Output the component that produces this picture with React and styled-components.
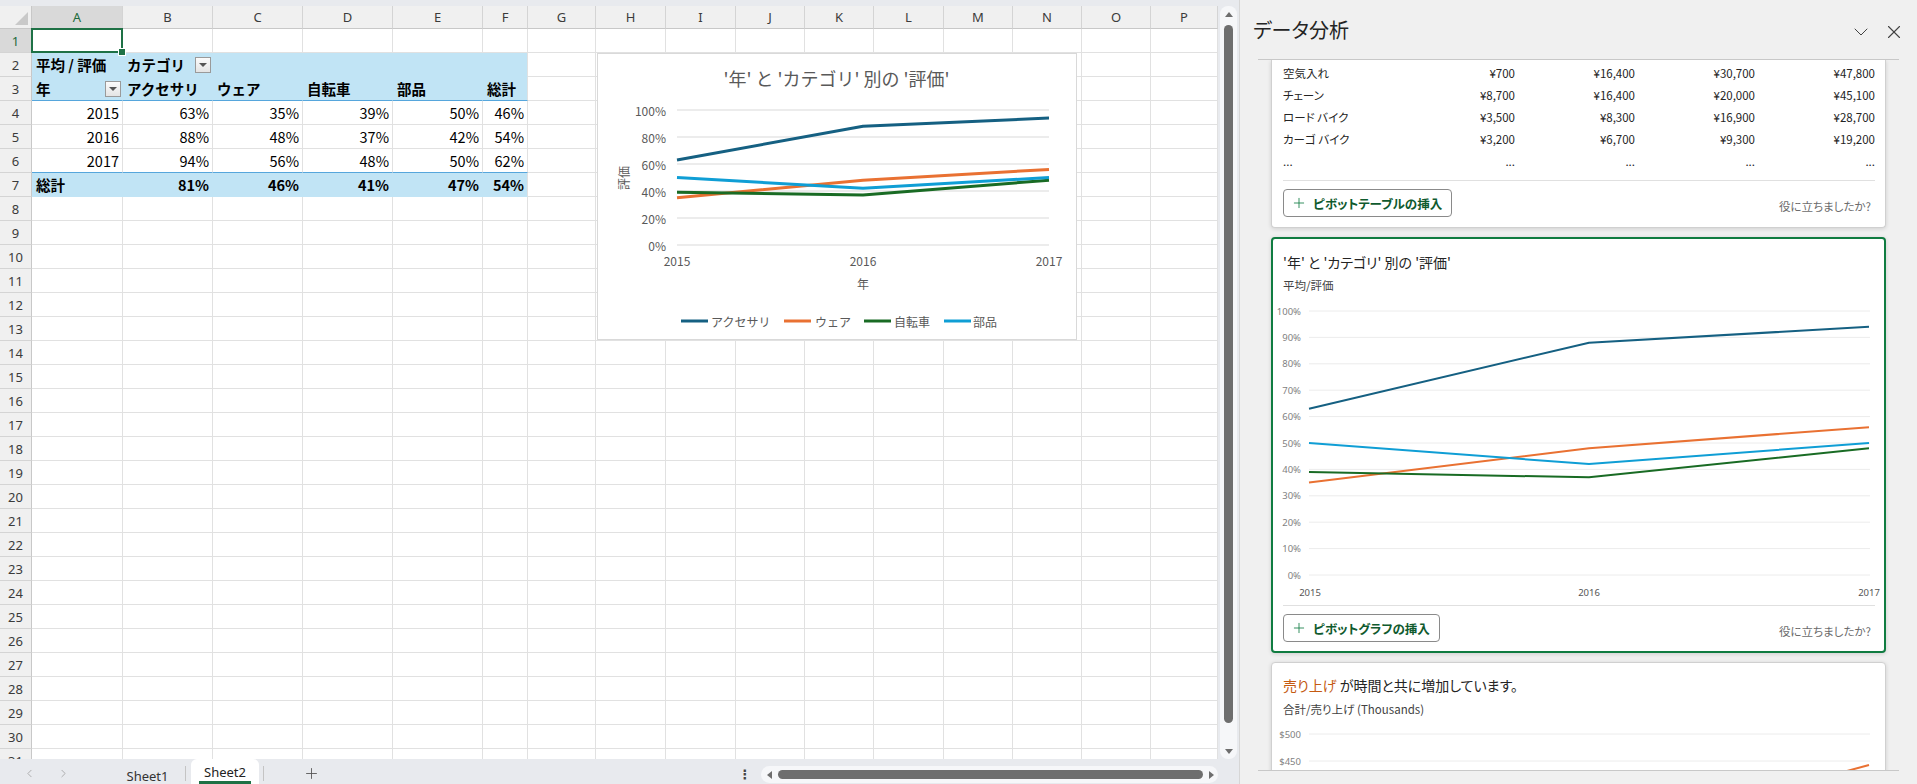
import React from 'react';
import styled, { createGlobalStyle, css } from 'styled-components';
import { ChevronDown, ChevronLeft, ChevronRight, Plus, X } from 'lucide-react';

const COLS = [
  { k: 'A', w: 91 }, { k: 'B', w: 90 }, { k: 'C', w: 90 }, { k: 'D', w: 90 },
  { k: 'E', w: 90 }, { k: 'F', w: 45 }, { k: 'G', w: 68 }, { k: 'H', w: 70 },
  { k: 'I', w: 70 }, { k: 'J', w: 69 }, { k: 'K', w: 69 }, { k: 'L', w: 70 },
  { k: 'M', w: 69 }, { k: 'N', w: 69 }, { k: 'O', w: 69 }, { k: 'P', w: 67 },
];
const GRID = `32px ${COLS.map(c => c.w + 'px').join(' ')}`;

const FILL = '#c1e4f5';
const GRIDLINE = '#e1e1e1';

// Office 2023 テーマ色
const SERIES = [
  { name: 'アクセサリ', color: '#156082', vals: [0.63, 0.88, 0.94] },
  { name: 'ウェア', color: '#E97132', vals: [0.35, 0.48, 0.56] },
  { name: '自転車', color: '#196B24', vals: [0.39, 0.37, 0.48] },
  { name: '部品', color: '#0F9ED5', vals: [0.5, 0.42, 0.5] },
];

const pct = (v, bold) => ({ t: v, right: 1, b: bold });
const PIVOT = {
  2: [{ t: '平均 / 評価', b: 1 }, { t: 'カテゴリ', b: 1, dd: 1 }, {}, {}, {}, {}],
  3: [{ t: '年', b: 1, dd: 1 }, { t: 'アクセサリ', b: 1 }, { t: 'ウェア', b: 1 }, { t: '自転車', b: 1 }, { t: '部品', b: 1 }, { t: '総計', b: 1 }],
  4: [pct('2015'), pct('63%'), pct('35%'), pct('39%'), pct('50%'), pct('46%')],
  5: [pct('2016'), pct('88%'), pct('48%'), pct('37%'), pct('42%'), pct('54%')],
  6: [pct('2017'), pct('94%'), pct('56%'), pct('48%'), pct('50%'), pct('62%')],
  7: [{ t: '総計', b: 1 }, pct('81%', 1), pct('46%', 1), pct('41%', 1), pct('47%', 1), pct('54%', 1)],
};

const SALES = [
  ['空気入れ', '¥700', '¥16,400', '¥30,700', '¥47,800'],
  ['チェーン', '¥8,700', '¥16,400', '¥20,000', '¥45,100'],
  ['ロード バイク', '¥3,500', '¥8,300', '¥16,900', '¥28,700'],
  ['カーゴ バイク', '¥3,200', '¥6,700', '¥9,300', '¥19,200'],
  ['...', '...', '...', '...', '...'],
];

const GlobalStyle = createGlobalStyle`
  html, body {
    margin: 0;
    padding: 0;
    overflow: hidden;
    background: #e8eaee;
  }
  body {
    font-family: "Noto Sans CJK JP", "Noto Sans", sans-serif;
  }
`;

const Frame = styled.div`
  display: flex;
  width: 1917px;
  height: 784px;
  overflow: hidden;
`;

const Workbook = styled.div`
  width: 1239px;
  flex-shrink: 0;
  display: flex;
  flex-direction: column;
  background: #e8eaee;
`;

const SheetRow = styled.div`
  flex: 1;
  min-height: 0;
  display: flex;
  padding-top: 6px;
`;

const GridViewport = styled.div`
  position: relative;
  width: 1218px;
  flex-shrink: 0;
  overflow: hidden;
  background: #fff;
`;

const GridRow = styled.div`
  display: grid;
  grid-template-columns: ${GRID};
  height: ${p => p.$h || 24}px;
`;

const headCell = css`
  box-sizing: border-box;
  display: flex;
  align-items: center;
  justify-content: center;
  font-family: "Noto Sans", sans-serif;
  font-size: 13px;
  background: ${p => (p.$active ? '#d9d9d9' : '#f0f0f0')};
  color: ${p => (p.$active ? '#1d6b3c' : '#3b3b3b')};
`;

const Corner = styled.div`
  ${headCell};
  position: relative;
  border-right: 1px solid #c8c8c8;
  border-bottom: 1px solid #c8c8c8;
`;

const CornerMark = styled.span`
  position: absolute;
  right: 3px;
  bottom: 3px;
  width: 0;
  height: 0;
  border-left: 13px solid transparent;
  border-bottom: 13px solid #c9c9c9;
`;

const ColHead = styled.div`
  ${headCell};
  border-right: 1px solid #d4d4d4;
  border-bottom: 1px solid #c8c8c8;
`;

const RowHead = styled.div`
  ${headCell};
  border-right: 1px solid #c8c8c8;
  border-bottom: 1px solid #d4d4d4;
`;

const Cell = styled.div`
  box-sizing: border-box;
  position: relative;
  display: flex;
  align-items: center;
  justify-content: ${p => (p.$right ? 'flex-end' : 'space-between')};
  padding: 0 3px 0 4px;
  background: ${p => (p.$fill ? FILL : '#fff')};
  border-right: 1px solid ${p => (p.$fill && !p.$edge ? FILL : GRIDLINE)};
  border-bottom: 1px solid ${p => (p.$blue ? '#56a6dc' : p.$fill ? FILL : GRIDLINE)};
  font-size: 14.5px;
  font-weight: ${p => (p.$bold ? 700 : 400)};
  color: #000;
  white-space: nowrap;
`;

const DropBtn = styled.span`
  box-sizing: border-box;
  width: 16px;
  height: 16px;
  margin-right: -2px;
  border: 1px solid #9a9a9a;
  background: linear-gradient(#fbfbfb, #e4e4e4);
  display: flex;
  align-items: center;
  justify-content: center;

  &::before {
    content: '';
    border-left: 4px solid transparent;
    border-right: 4px solid transparent;
    border-top: 4px solid #555;
  }
`;

const Selection = styled.div`
  position: absolute;
  left: -1px;
  top: -1px;
  right: -1px;
  bottom: -1px;
  border: 2px solid #1e7145;
  pointer-events: none;
  z-index: 2;

  &::after {
    content: '';
    position: absolute;
    right: -5px;
    bottom: -5px;
    width: 6px;
    height: 6px;
    background: #1e7145;
    border: 1px solid #fff;
  }
`;

const ChartBox = styled.div`
  position: absolute;
  left: 597px;
  top: 47px;
  width: 480px;
  height: 287px;
  box-sizing: border-box;
  background: #fff;
  border: 1px solid #d9d9d9;
  z-index: 3;

  svg {
    display: block;
    font-family: "Noto Sans CJK JP", "Noto Sans", sans-serif;
  }
`;

const VScroll = styled.div`
  width: 17px;
  margin-left: 2px;
  box-sizing: border-box;
  background: #f6f7f9;
  border-radius: 8px;
  display: flex;
  flex-direction: column;
  align-items: center;
  padding: 6px 0 5px;
`;

const Tri = styled.span`
  width: 0;
  height: 0;
  ${p => (p.$dir === 'up' || p.$dir === 'down') && css`
    border-left: 4px solid transparent;
    border-right: 4px solid transparent;
  `}
  ${p => (p.$dir === 'left' || p.$dir === 'right') && css`
    border-top: 4px solid transparent;
    border-bottom: 4px solid transparent;
  `}
  ${p => p.$dir === 'up' && 'border-bottom: 5px solid #6e6e6e;'}
  ${p => p.$dir === 'down' && 'border-top: 5px solid #6e6e6e;'}
  ${p => p.$dir === 'left' && 'border-right: 5px solid #6e6e6e;'}
  ${p => p.$dir === 'right' && 'border-left: 5px solid #6e6e6e;'}
`;

const VThumb = styled.div`
  width: 9px;
  height: 698px;
  margin-top: 8px;
  border-radius: 5px;
  background: #6e6e6e;
`;

const Spacer = styled.div`
  flex: 1;
`;

const TabBar = styled.div`
  height: 25px;
  flex-shrink: 0;
  display: flex;
  align-items: stretch;
  padding: 0 21px 0 12px;
  font-family: "Noto Sans", sans-serif;
  font-size: 13px;
  color: #333;
`;

const NavBtn = styled.div`
  width: 34px;
  display: flex;
  align-items: center;
  justify-content: center;
  padding-top: 4px;
  color: #a0a0a0;
`;

const SheetTab = styled.div`
  position: relative;
  width: ${p => p.$w}px;
  margin-left: ${p => p.$ml || 0}px;
  display: flex;
  align-items: center;
  justify-content: center;
  box-sizing: border-box;
  padding-top: ${p => (p.$active ? 1 : 8)}px;
  ${p => p.$active && css`
    background: #fff;
    border-radius: 6px 6px 0 0;
    color: #222;
    &::after {
      content: '';
      position: absolute;
      left: 8px;
      right: 8px;
      bottom: 0;
      height: 3px;
      background: #1e7145;
    }
  `}
`;

const TabSep = styled.div`
  width: 1px;
  height: 15px;
  margin: 7px 0 0 ${p => p.$ml || 0}px;
  background: #c4c4c4;
`;

const AddSheet = styled.div`
  width: 40px;
  margin-left: 27px;
  display: flex;
  align-items: center;
  justify-content: center;
  padding-top: 3px;
  color: #555;
`;

const MoreBtn = styled.div`
  width: 20px;
  display: flex;
  align-items: center;
  justify-content: center;
  padding-top: 6px;
  font-family: "DejaVu Sans", sans-serif;
  font-size: 13px;
  font-weight: 700;
  color: #444;
`;

const HScroll = styled.div`
  width: 457px;
  height: 17px;
  margin: 7px 0 0 6px;
  box-sizing: border-box;
  padding: 0 4px 0 6px;
  display: flex;
  align-items: center;
  gap: 6px;
  background: #f6f7f9;
  border-radius: 9px;
`;

const HThumb = styled.div`
  flex: 1;
  height: 9px;
  border-radius: 5px;
  background: #6e6e6e;
`;

/* ---- 右側: データ分析 ペイン ---- */

const Pane = styled.aside`
  flex: 1;
  display: flex;
  flex-direction: column;
  background: #f0f0f0;
  border-left: 1px solid #d6d6d6;
  font-family: "Noto Sans CJK JP", "Noto Sans", sans-serif;
  font-feature-settings: "palt";
  color: #242424;
`;

const PaneHeader = styled.header`
  height: 59px;
  flex-shrink: 0;
  display: flex;
  align-items: center;
  justify-content: space-between;
  padding: 0 11px 0 13px;
`;

const PaneTitle = styled.h1`
  margin: 0;
  font-size: 20px;
  font-weight: 400;
`;

const HeaderIcons = styled.div`
  display: flex;
  gap: 9px;
  padding-top: 4px;
  color: #424242;
`;

const IconBtn = styled.span`
  width: 24px;
  height: 24px;
  display: flex;
  align-items: center;
  justify-content: center;
`;

const PaneBody = styled.div`
  height: 712px;
  margin: 0 18px;
  box-sizing: border-box;
  padding: 0 13px;
  border-top: 1px solid #c8c8c8;
  border-bottom: 1px solid #c8c8c8;
  overflow: hidden;
  display: flex;
  flex-direction: column;
  gap: 9px;
`;

const Card = styled.section`
  flex-shrink: 0;
  background: #fff;
  border: ${p => (p.$active ? '2px solid #107c41' : '1px solid #d0d0d0')};
  border-radius: 4px;
  box-shadow: 0 1px 4px rgba(0, 0, 0, 0.14);
  padding: ${p => (p.$active ? '13px 9px 9px 10px' : '12px 10px 10px 11px')};
  ${p => p.$clipped && css`
    border-top: none;
    border-radius: 0 0 4px 4px;
    padding-top: 2px;
  `}
`;

const DataTable = styled.div`
  display: grid;
  grid-template-columns: 112px repeat(4, 120px);
  font-size: 11.5px;
  color: #242424;
`;

const DataCell = styled.div`
  height: 22px;
  display: flex;
  align-items: center;
  justify-content: ${p => (p.$right ? 'flex-end' : 'flex-start')};
  white-space: nowrap;
`;

const Divider = styled.hr`
  margin: ${p => p.$mt || 8}px 0 0;
  border: none;
  border-top: 1px solid #e0e0e0;
`;

const CardFooter = styled.div`
  margin-top: 8px;
  display: flex;
  align-items: flex-end;
  justify-content: space-between;
`;

const InsertButton = styled.button`
  height: 28px;
  display: inline-flex;
  align-items: center;
  gap: 6px;
  padding: 0 9px 0 7px;
  background: #fff;
  border: 1px solid #8a8a8a;
  border-radius: 4px;
  font-family: "Noto Sans CJK JP", sans-serif;
  font-feature-settings: "palt";
  font-size: 12.5px;
  font-weight: 600;
  color: #0f5a2e;

  svg {
    color: #107c41;
  }
`;

const Helpful = styled.span`
  padding: 0 4px 3px 0;
  font-size: 11.5px;
  color: #6b6b6b;
`;

const CardTitle = styled.div`
  font-size: 14px;
  line-height: 20px;
`;

const Accent = styled.span`
  color: #c55a11;
`;

const CardSub = styled.div`
  margin-top: ${p => p.$mt || 5}px;
  font-size: 11.5px;
  line-height: 16px;
  color: #424242;
`;

const PaneChart = styled.svg`
  display: block;
  margin-top: ${p => p.$mt || 5}px;
  overflow: visible;
  font-family: "Noto Sans", sans-serif;
`;

/* ---- グラフ ---- */

function MainChart() {
  const xs = [79, 265, 451];
  const y = v => 191 - v * 135;
  const legend = [[83, 113], [186, 217], [266, 296], [346, 375]];
  return (
    <ChartBox>
      <svg width="478" height="285">
        <text x="238.5" y="24" textAnchor="middle" dominantBaseline="central" fontSize="18" fill="#595959">
          '年' と 'カテゴリ' 別の '評価'
        </text>
        {[0, 1, 2, 3, 4, 5].map(k => (
          <g key={k}>
            <line x1={xs[0]} x2={xs[2]} y1={y(k * 0.2)} y2={y(k * 0.2)} stroke="#d9d9d9" strokeWidth="1" />
            <text x="68" y={y(k * 0.2)} textAnchor="end" dominantBaseline="central" fontSize="12" fill="#595959">
              {k * 20}%
            </text>
          </g>
        ))}
        {['2015', '2016', '2017'].map((t, i) => (
          <text key={t} x={xs[i]} y="206" textAnchor="middle" dominantBaseline="central" fontSize="12" fill="#595959">{t}</text>
        ))}
        <text x="265" y="229" textAnchor="middle" dominantBaseline="central" fontSize="12" fill="#595959">年</text>
        <text x="25" y="124" textAnchor="middle" dominantBaseline="central" fontSize="12" fill="#595959" transform="rotate(-90 25 124)">評価</text>
        {SERIES.map(s => (
          <polyline key={s.name} points={s.vals.map((v, i) => `${xs[i]},${y(v)}`).join(' ')}
            fill="none" stroke={s.color} strokeWidth="3" strokeLinejoin="round" />
        ))}
        {SERIES.map((s, i) => (
          <g key={s.name}>
            <line x1={legend[i][0]} x2={legend[i][0] + 27} y1="267" y2="267" stroke={s.color} strokeWidth="3" />
            <text x={legend[i][1]} y="267" dominantBaseline="central" fontSize="12" fill="#595959">{s.name}</text>
          </g>
        ))}
      </svg>
    </ChartBox>
  );
}

function RatingChart() {
  const xs = [26, 306, 586];
  const y = v => 277 - v * 264;
  return (
    <PaneChart width="592" height="300">
      {Array.from({ length: 11 }, (_, k) => (
        <g key={k}>
          <line x1="26" x2="587" y1={y(k / 10)} y2={y(k / 10)} stroke="#ececec" />
          <text x="18" y={y(k / 10)} textAnchor="end" dominantBaseline="central" fontSize="9.5" fill="#7f7f7f">{k * 10}%</text>
        </g>
      ))}
      {SERIES.map(s => (
        <polyline key={s.name} points={s.vals.map((v, i) => `${xs[i]},${y(v)}`).join(' ')}
          fill="none" stroke={s.color} strokeWidth="2" strokeLinejoin="round" />
      ))}
      {['2015', '2016', '2017'].map((t, i) => (
        <text key={t} x={xs[i] + (i === 0 ? 1 : 0)} y="294" textAnchor="middle" dominantBaseline="central" fontSize="9.5" fill="#555">{t}</text>
      ))}
    </PaneChart>
  );
}

function SalesChart() {
  return (
    <PaneChart width="592" height="50" $mt={4}>
      {[['$500', 13], ['$450', 40]].map(([t, yy]) => (
        <g key={t}>
          <line x1="26" x2="587" y1={yy} y2={yy} stroke="#ececec" />
          <text x="18" y={yy} textAnchor="end" dominantBaseline="central" fontSize="9.5" fill="#7f7f7f">{t}</text>
        </g>
      ))}
      <polyline points="306,120 586,44" fill="none" stroke="#E97132" strokeWidth="2" />
    </PaneChart>
  );
}

/* ---- シート ---- */

function Sheet() {
  return (
    <GridViewport>
      <GridRow $h={23}>
        <Corner><CornerMark /></Corner>
        {COLS.map((c, i) => <ColHead key={c.k} $active={i === 0}>{c.k}</ColHead>)}
      </GridRow>
      {Array.from({ length: 31 }, (_, i) => {
        const r = i + 1;
        const pv = PIVOT[r];
        const filled = r === 2 || r === 3 || r === 7;
        return (
          <GridRow key={r}>
            <RowHead $active={r === 1}>{r}</RowHead>
            {COLS.map((c, ci) => {
              const inPivot = ci < 6;
              const d = pv && inPivot ? pv[ci] : null;
              return (
                <Cell
                  key={c.k}
                  $fill={filled && inPivot}
                  $edge={ci === 5}
                  $blue={inPivot && (r === 3 || r === 6)}
                  $right={d && d.right}
                  $bold={d && d.b}
                >
                  {d && d.t}
                  {d && d.dd && <DropBtn />}
                  {r === 1 && ci === 0 && <Selection />}
                </Cell>
              );
            })}
          </GridRow>
        );
      })}
      <MainChart />
    </GridViewport>
  );
}

export default function App() {
  return (
    <>
      <GlobalStyle />
      <Frame>
        <Workbook>
          <SheetRow>
            <Sheet />
            <VScroll>
              <Tri $dir="up" />
              <VThumb />
              <Spacer />
              <Tri $dir="down" />
            </VScroll>
          </SheetRow>
          <TabBar>
            <NavBtn><ChevronLeft size={13} strokeWidth={1.5} /></NavBtn>
            <NavBtn><ChevronRight size={13} strokeWidth={1.5} /></NavBtn>
            <SheetTab $w={75} $ml={30}>Sheet1</SheetTab>
            <TabSep />
            <SheetTab $w={68} $ml={5} $active>Sheet2</SheetTab>
            <TabSep $ml={4} />
            <AddSheet><Plus size={17} strokeWidth={1.25} /></AddSheet>
            <Spacer />
            <MoreBtn>⋮</MoreBtn>
            <HScroll>
              <Tri $dir="left" />
              <HThumb />
              <Tri $dir="right" />
            </HScroll>
          </TabBar>
        </Workbook>

        <Pane>
          <PaneHeader>
            <PaneTitle>データ分析</PaneTitle>
            <HeaderIcons>
              <IconBtn><ChevronDown size={28} strokeWidth={1} /></IconBtn>
              <IconBtn><X size={22} strokeWidth={1.2} /></IconBtn>
            </HeaderIcons>
          </PaneHeader>
          <PaneBody>
            <Card $clipped>
              <DataTable>
                {SALES.map(row => row.map((v, i) => (
                  <DataCell key={row[0] + i} $right={i > 0}>{v}</DataCell>
                )))}
              </DataTable>
              <Divider />
              <CardFooter>
                <InsertButton><Plus size={16} strokeWidth={1.25} />ピボットテーブルの挿入</InsertButton>
                <Helpful>役に立ちましたか?</Helpful>
              </CardFooter>
            </Card>

            <Card $active>
              <CardTitle>'年' と 'カテゴリ' 別の '評価'</CardTitle>
              <CardSub>平均/評価</CardSub>
              <RatingChart />
              <Divider $mt={7} />
              <CardFooter>
                <InsertButton><Plus size={16} strokeWidth={1.25} />ピボットグラフの挿入</InsertButton>
                <Helpful>役に立ちましたか?</Helpful>
              </CardFooter>
            </Card>

            <Card>
              <CardTitle><Accent>売り上げ</Accent> が時間と共に増加しています。</CardTitle>
              <CardSub $mt={6}>合計/売り上げ (Thousands)</CardSub>
              <SalesChart />
            </Card>
          </PaneBody>
        </Pane>
      </Frame>
    </>
  );
}
